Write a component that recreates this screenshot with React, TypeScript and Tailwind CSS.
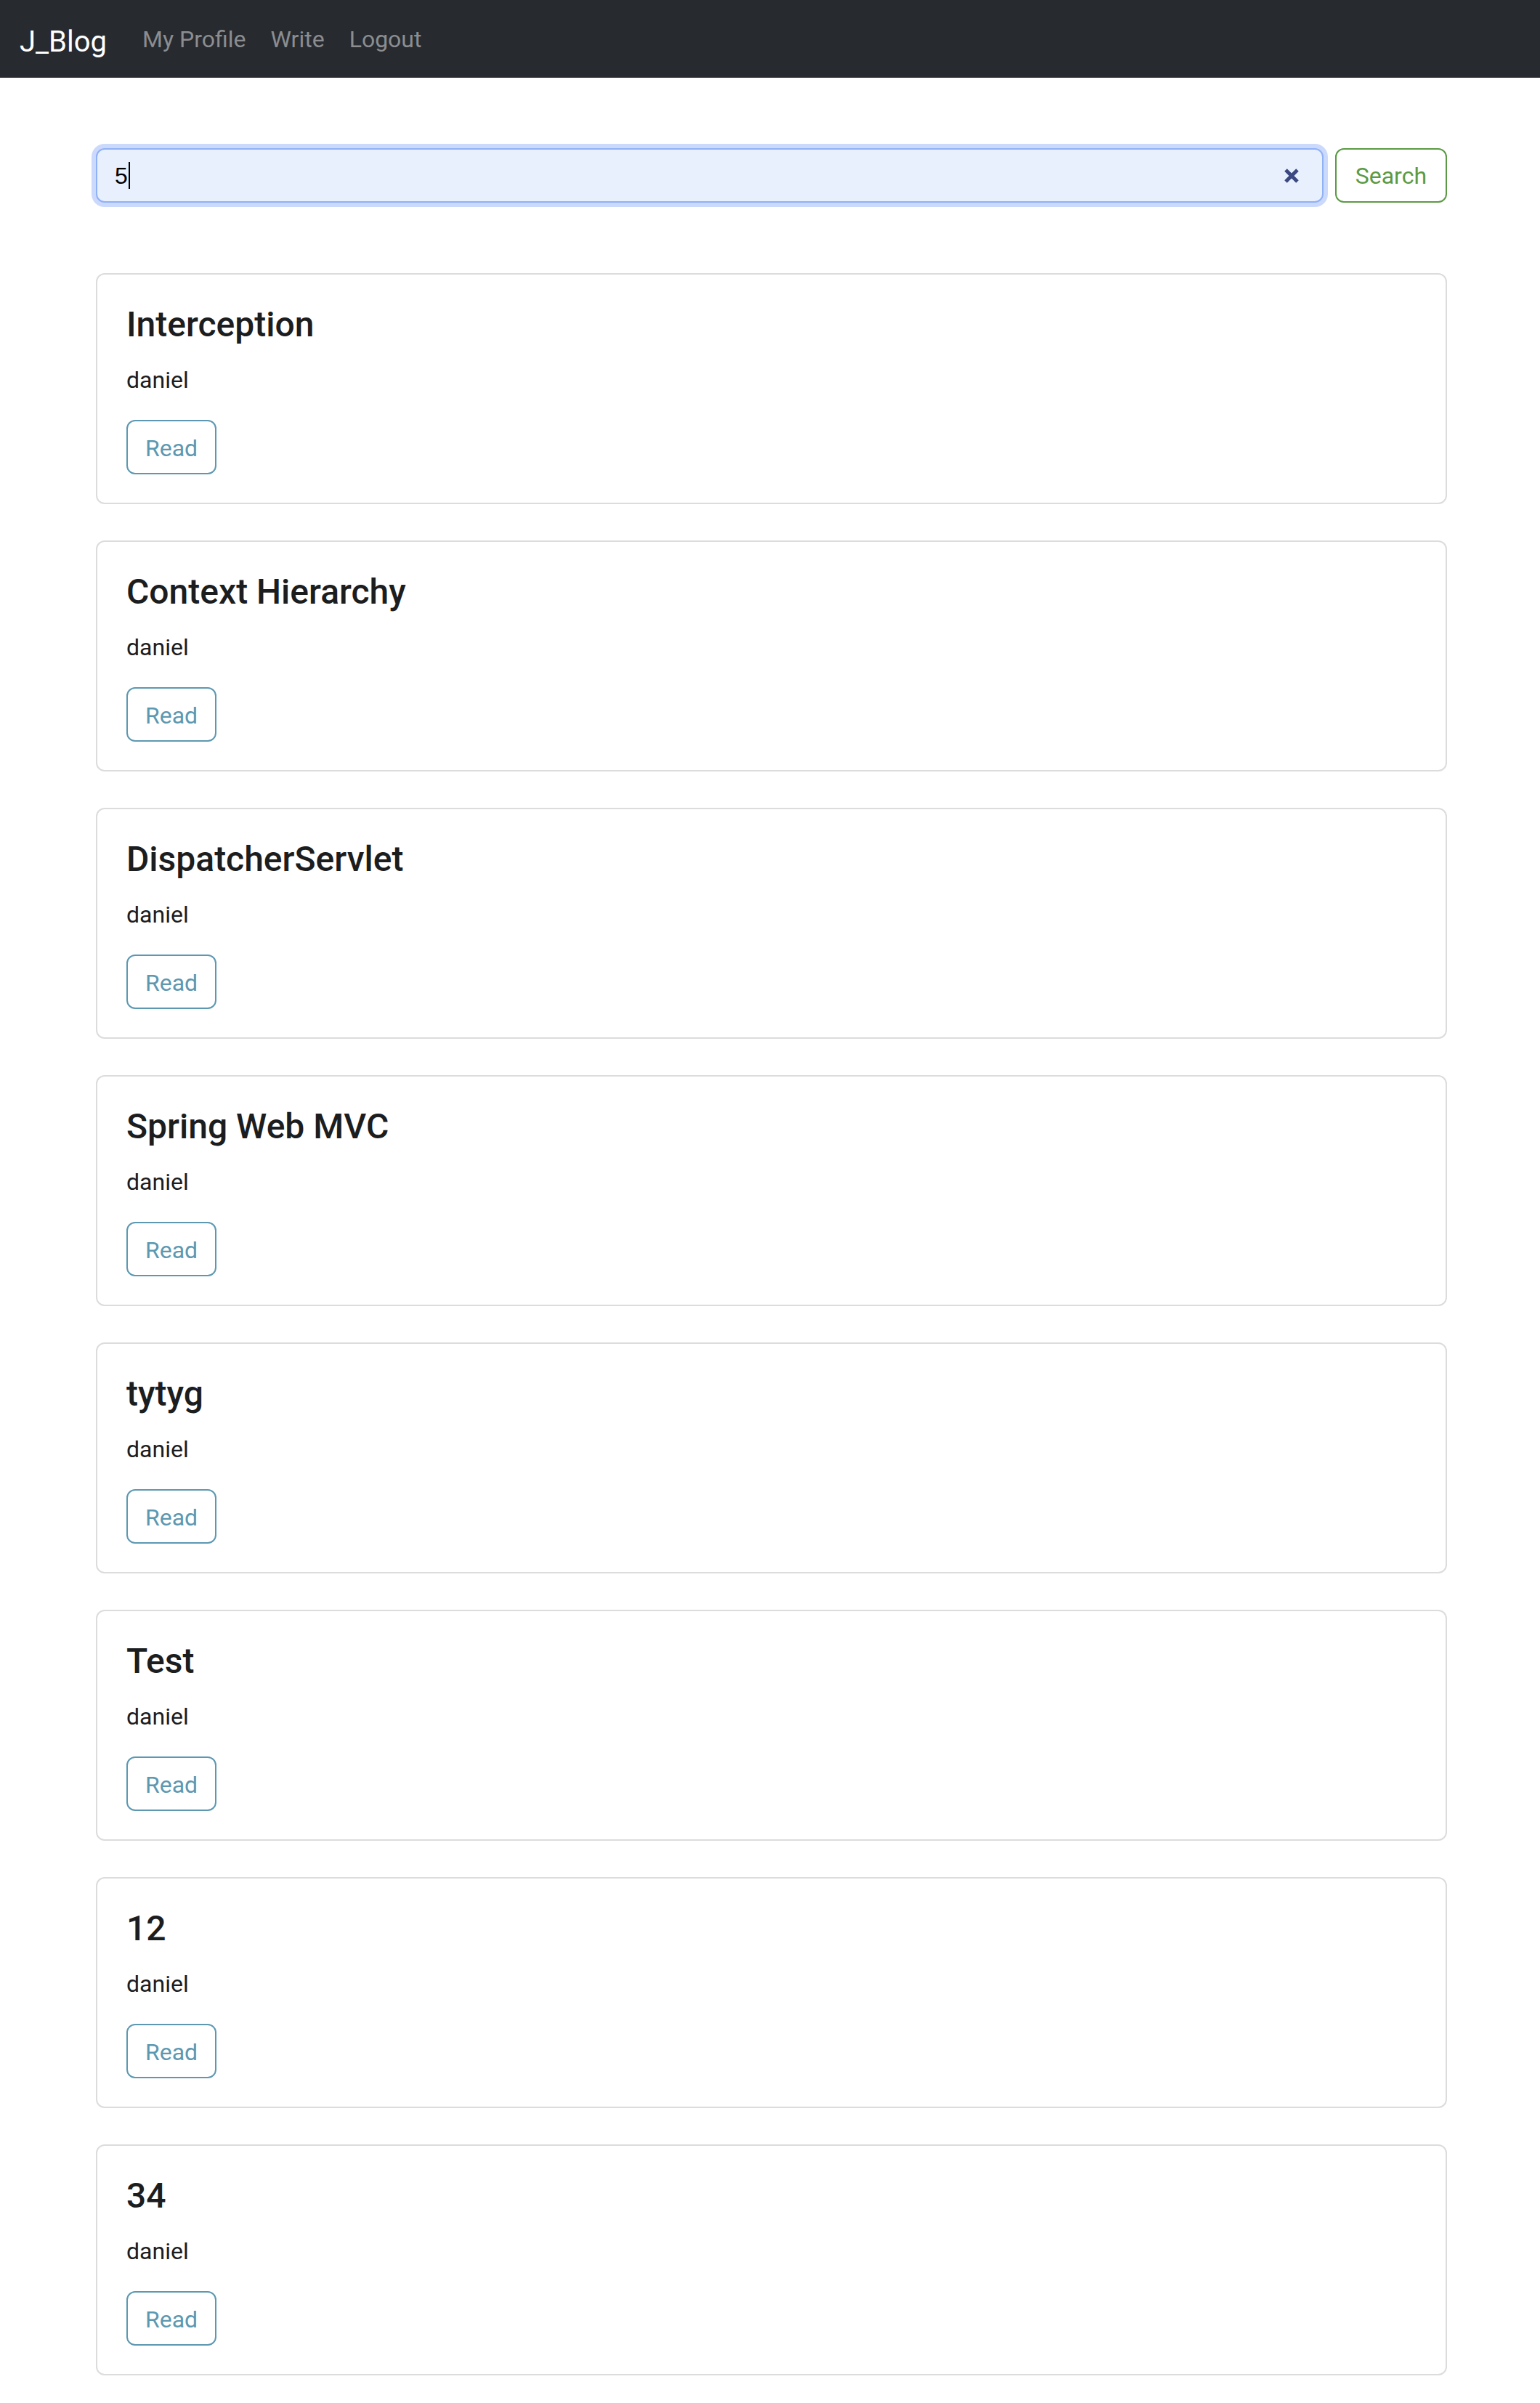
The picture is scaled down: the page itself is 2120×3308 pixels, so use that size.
import React from "react";

const POSTS = [
  { title: "Interception", author: "daniel" },
  { title: "Context Hierarchy", author: "daniel" },
  { title: "DispatcherServlet", author: "daniel" },
  { title: "Spring Web MVC", author: "daniel" },
  { title: "tytyg", author: "daniel" },
  { title: "Test", author: "daniel" },
  { title: "12", author: "daniel" },
  { title: "34", author: "daniel" },
];

const NAV_LINKS = ["My Profile", "Write", "Logout"];

function Navbar() {
  return (
    <nav className="flex h-[107px] items-center bg-[#272a2f] pl-[27px]">
      <a href="#" className="mr-[32px] pt-[8px] text-[40px] leading-[60px] text-white">
        J_Blog
      </a>
      <ul className="flex items-center">
        {NAV_LINKS.map((label) => (
          <li key={label}>
            <a href="#" className="block px-[17px] text-[32px] leading-[48px] text-[#8b8d90]">
              {label}
            </a>
          </li>
        ))}
      </ul>
    </nav>
  );
}

function SearchBar() {
  return (
    <form className="flex items-center gap-[16px]" onSubmit={(e) => e.preventDefault()}>
      <div className="flex h-[75px] flex-1 items-center rounded-[12px] border-2 border-[#8fb1f6] bg-[#e8f0fe] pl-[24px] pr-[31px] shadow-[0_0_0_6px_#cbd9fd]">
        <span className="font-['Liberation_Sans',Arial,sans-serif] text-[32px] leading-[48px] text-black">5</span>
        <span className="ml-[1px] h-[37px] w-[2px] bg-black" />
        <div className="flex-1" />
        <svg className="h-[22px] w-[22px]" viewBox="0 0 22 22" fill="none" stroke="#3b4881" strokeWidth={5}>
          <path d="M3 3l16 16M19 3L3 19" />
        </svg>
      </div>
      <button
        type="submit"
        className="h-[75px] rounded-[12px] border-2 border-[#5a9a44] px-[26px] text-[32px] leading-[48px] text-[#5a9a44]"
      >
        Search
      </button>
    </form>
  );
}

function PostCard({ title, author }: { title: string; author: string }) {
  return (
    <div className="rounded-[12px] border-2 border-[#dcdcdc] px-[40px] pb-[39px] pt-[40px]">
      <h5 className="mb-[23px] text-[48px] font-medium leading-[58px] text-[#1c1d1f]">{title}</h5>
      <p className="mb-[31px] text-[32px] leading-[48px] text-[#1c1d1f]">{author}</p>
      <a
        href="#"
        className="inline-flex h-[75px] items-center rounded-[12px] border-2 border-[#5c98b1] px-[24px] pt-[3px] text-[32px] leading-[48px] text-[#5c98b1]"
      >
        Read
      </a>
    </div>
  );
}

export default function App() {
  return (
    <div className="min-h-[3308px] bg-white font-['Roboto','Liberation_Sans',sans-serif]">
      <Navbar />
      <main className="ml-[132px] w-[1860px] pb-[38px] pt-[97px]">
        <SearchBar />
        <div className="mt-[97px] flex flex-col gap-[50px]">
          {POSTS.map((post) => (
            <PostCard key={post.title} title={post.title} author={post.author} />
          ))}
        </div>
      </main>
    </div>
  );
}
